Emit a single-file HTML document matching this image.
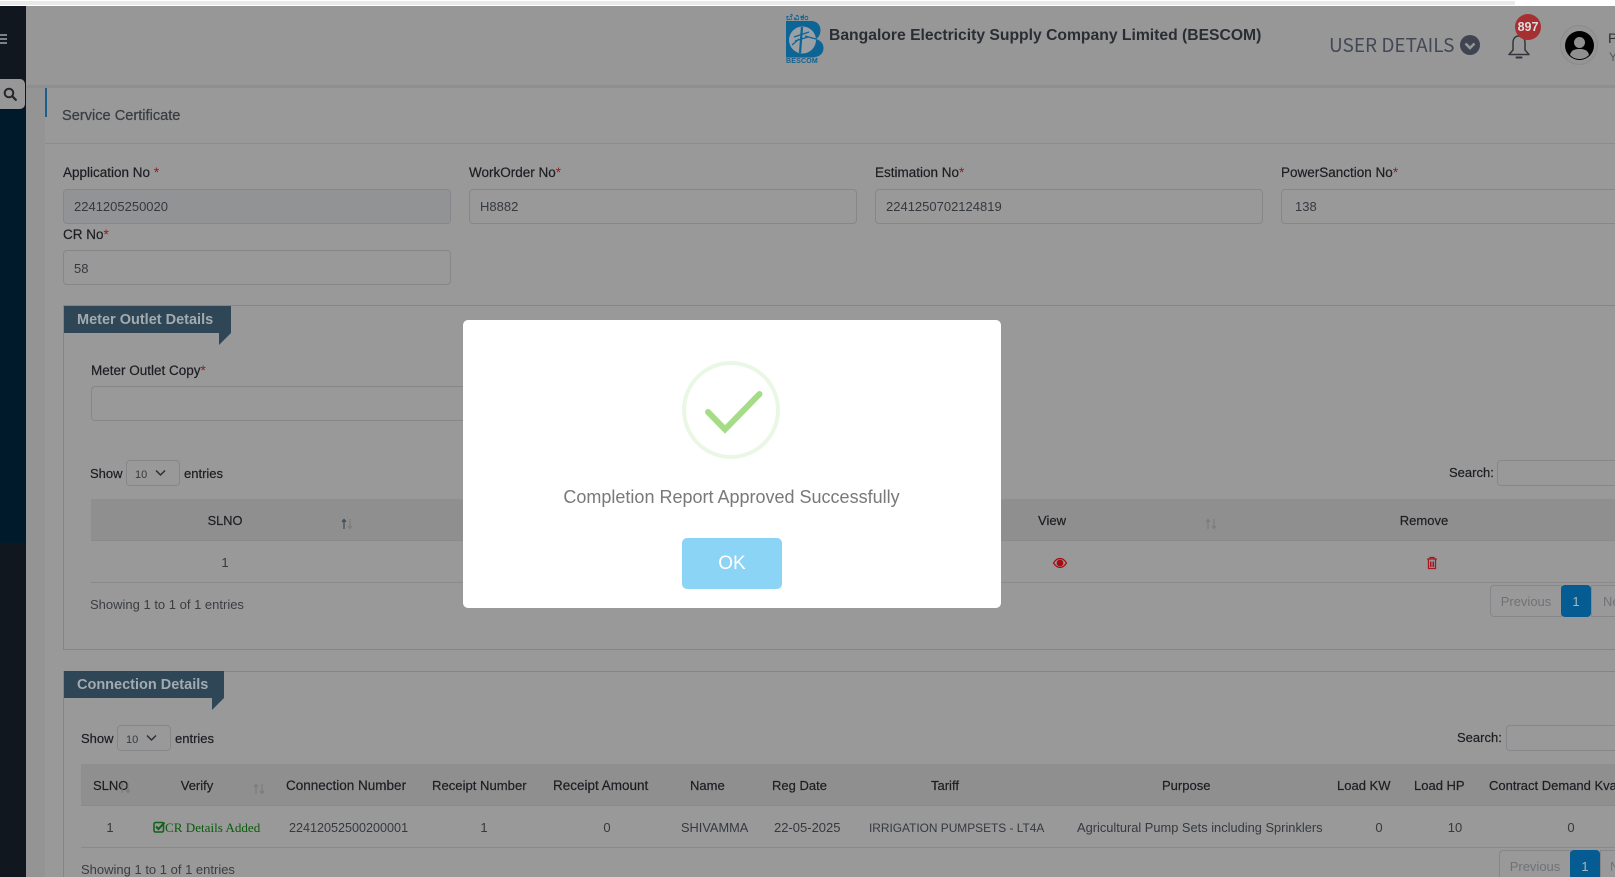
<!DOCTYPE html>
<html lang="en">
<head>
<meta charset="utf-8">
<title>Service Certificate</title>
<style>
html,body{margin:0;padding:0;width:1615px;height:877px;overflow:hidden;background:#999}
body{position:relative;font-family:"Liberation Sans","Noto Sans CJK SC",sans-serif}
div,svg,span.a{position:absolute}
.t{position:absolute;white-space:nowrap;line-height:20px;height:20px;font-size:13.5px;color:#25282c;margin-top:1px}
.c{transform:translateX(-50%)}
.b{color:#1c1e22;-webkit-text-stroke:.2px #1c1e22}
.v{color:#35393e}
.m{color:#3a3d42}
.r{color:#8f1c22;-webkit-text-stroke:0}
.in{box-sizing:border-box;border:1px solid #85878a;border-radius:4px;height:35px}
.sel{box-sizing:border-box;border:1px solid #85878a;border-radius:4px;height:26px;width:54px}
.hd{background:#8f8f8f;height:42px;border-bottom:1px solid #8a8a8a;box-sizing:border-box}
.ln{height:1px;background:#8a8a8a}
.tab{background:#2f4656;height:27px}
.tabt{font-weight:bold;font-size:14.5px;color:#a3abb0}
.pg{box-sizing:border-box;border:1px solid #85878a;color:#6f7276;font-size:13px;line-height:31px;text-align:center}
</style>
</head>
<body>
<!-- browser strip -->
<div style="left:0;top:0;width:1615px;height:6px;background:#fff"></div>
<div style="left:0;top:1px;width:1515px;height:4px;background:#e9e9e9"></div>

<!-- sidebar -->
<div style="left:0;top:6px;width:26px;height:871px;background:#11171f"></div>
<div style="left:0;top:109px;width:26px;height:434px;background:#001a2c"></div>
<div style="left:0;top:34px;width:7px;height:2px;background:#7d8087"></div>
<div style="left:0;top:38px;width:7px;height:2px;background:#7d8087"></div>
<div style="left:0;top:42px;width:7px;height:2px;background:#7d8087"></div>
<div style="left:0;top:79px;width:25px;height:30px;background:#979797;border-radius:0 5px 5px 0"></div>
<svg style="left:3px;top:87px" width="14" height="14" viewBox="0 0 14 14"><circle cx="6" cy="6" r="4.3" fill="none" stroke="#24272b" stroke-width="2"/><path d="M9.2 9.2L12.8 12.8" stroke="#24272b" stroke-width="2.2" stroke-linecap="round"/></svg>

<!-- main background -->
<div style="left:26px;top:6px;width:1589px;height:871px;background:#949494"></div>
<!-- header -->
<div style="left:26px;top:6px;width:1589px;height:79px;background:#979797"></div>
<div style="left:26px;top:85px;width:1589px;height:3px;background:#8f8f8f"></div>

<!-- logo -->
<span class="t" style="left:786px;top:6px;font-size:9px;color:#10608f;font-weight:bold;letter-spacing:1px">ಬೆವಿಕಂ</span>
<svg style="left:785px;top:20px" width="40" height="39" viewBox="0 0 40 39"><path d="M1 1H26C32 1 35.500 5 35.500 10C35.500 14 34 17 31 19C36 20.500 38.500 24 38.500 28C38.500 34 34 37.500 26 37.500H1Z" fill="#0d6497"/><circle cx="17.500" cy="20" r="13.500" fill="#9aa0a3"/><path d="M17 7L15 33" stroke="#0d6497" stroke-width="2.200" fill="none"/><path d="M9 17L24 12M10 21L23 17M7 25L14 19M20 16L31 19" stroke="#0d6497" stroke-width="1.200" fill="none"/></svg>
<span class="t" style="left:786px;top:51px;font-size:7px;font-weight:bold;color:#10608f;letter-spacing:.2px">BESCOM</span>

<span class="t" style="left:829px;top:25px;font-size:15.7px;font-weight:bold;color:#2a2d33">Bangalore Electricity Supply Company Limited (BESCOM)</span>
<span class="t" style="left:1329px;top:34px;font-size:19px;color:#434856;font-family:'Noto Sans CJK SC','Liberation Sans',sans-serif;font-weight:400">USER DETAILS</span>
<svg style="left:1460px;top:35px" width="20" height="20" viewBox="0 0 20 20"><circle cx="10" cy="10" r="10" fill="#3f4450"/><path d="M5.500 8.500L10 13L14.500 8.500" fill="none" stroke="#979797" stroke-width="2.600"/></svg>
<svg style="left:1507px;top:33px" width="24" height="27" viewBox="0 0 24 27"><path d="M12 3C7.500 3 6 6.500 6 10V17L2 21.500H22L18 17V10C18 6.500 16.500 3 12 3Z" fill="none" stroke="#33363d" stroke-width="1.500" stroke-linejoin="round"/><path d="M9.500 24.500H14.500" stroke="#33363d" stroke-width="2" stroke-linecap="round"/></svg>
<div style="left:1515px;top:14px;width:26px;height:26px;border-radius:50%;background:#a52f31"></div>
<span class="t c" style="left:1528px;top:16px;font-size:12.500px;font-weight:bold;color:#ddd">897</span>
<div style="left:1560px;top:25px;width:38px;height:40px;border-radius:50%;background:#959595;border:1px solid #8b8b8b;box-sizing:border-box"></div>
<svg style="left:1565px;top:31px" width="29" height="29" viewBox="0 0 29 29"><circle cx="14.500" cy="14.500" r="14.500" fill="#000"/><circle cx="14.500" cy="11.500" r="5.500" fill="#8f8f8f"/><path d="M5 24C6 19 10 18 14.500 18S23 19 24 24C21 27 18 28 14.500 28S8 27 5 24Z" fill="#8f8f8f"/></svg>
<span class="t" style="left:1608px;top:27px;font-size:14px;color:#2b2d32">P</span>
<span class="t" style="left:1609px;top:46px;font-size:12px;color:#55585c">Y</span>

<!-- card -->
<div style="left:45px;top:88px;width:1570px;height:789px;background:#999"></div>
<div style="left:45px;top:88px;width:2px;height:29px;background:#1b5f8a"></div>
<div style="left:45px;top:143px;width:1570px;height:1px;background:#8c8c8c"></div>
<span class="t m" style="left:62px;top:105px;font-size:14.600px;-webkit-text-stroke:.25px #3a3d42">Service Certificate</span>

<!-- form row -->
<span class="t b" style="left:63px;top:162px">Application No <span class="r">*</span></span>
<span class="t b" style="left:469px;top:162px">WorkOrder No<span class="r">*</span></span>
<span class="t b" style="left:875px;top:162px">Estimation No<span class="r">*</span></span>
<span class="t b" style="left:1281px;top:162px">PowerSanction No<span class="r">*</span></span>
<div class="in" style="left:63px;top:189px;width:388px;background:#929395"></div>
<div class="in" style="left:469px;top:189px;width:388px"></div>
<div class="in" style="left:875px;top:189px;width:388px"></div>
<div class="in" style="left:1281px;top:189px;width:340px"></div>
<span class="t v" style="left:74px;top:196px;font-size:13px">2241205250020</span>
<span class="t v" style="left:480px;top:196px;font-size:13px">H8882</span>
<span class="t v" style="left:886px;top:196px;font-size:13px">2241250702124819</span>
<span class="t v" style="left:1295px;top:196px;font-size:13px">138</span>
<span class="t b" style="left:63px;top:224px">CR No<span class="r">*</span></span>
<div class="in" style="left:63px;top:250px;width:388px"></div>
<span class="t v" style="left:74px;top:258px;font-size:13px">58</span>

<!-- meter outlet panel -->
<div style="left:63px;top:305px;width:1560px;height:345px;box-sizing:border-box;border:1px solid #858585"></div>
<div class="tab" style="left:64px;top:306px;width:167px"></div>
<svg style="left:219px;top:333px" width="12" height="12"><path d="M0 0H12L0 12Z" fill="#2f4656"/></svg>
<span class="t tabt" style="left:77px;top:309px">Meter Outlet Details</span>
<span class="t b" style="left:91px;top:360px">Meter Outlet Copy<span class="r">*</span></span>
<div class="in" style="left:91px;top:386px;width:800px"></div>

<span class="t b" style="left:90px;top:463px;font-size:13px">Show</span>
<div class="sel" style="left:126px;top:460px"></div>
<span class="t v" style="left:135px;top:464px;font-size:11px">10</span>
<svg style="left:155px;top:469px" width="11" height="8"><path d="M1 1.500L5.500 6L10 1.500" fill="none" stroke="#2c2f33" stroke-width="1.500"/></svg>
<span class="t b" style="left:184px;top:463px;font-size:13px">entries</span>
<span class="t b" style="left:1449px;top:462px;font-size:13px">Search:</span>
<div class="sel" style="left:1497px;top:460px;width:130px"></div>

<div class="hd" style="left:91px;top:499px;width:1524px"></div>
<span class="t c b" style="left:225px;top:510px;font-size:12.800px">SLNO</span>
<svg style="left:341px;top:518px" width="12" height="12" viewBox="0 0 12 12"><path d="M3 11V2M1 4L3 1.500L5 4" fill="none" stroke="#3b4a55" stroke-width="1.200"/><path d="M9 1V10M7 8L9 10.500L11 8" fill="none" stroke="#7c7c7c" stroke-width="1.200"/></svg>
<span class="t c b" style="left:1052px;top:510px;font-size:13px">View</span>
<svg style="left:1205px;top:518px" width="12" height="12" viewBox="0 0 12 12"><path d="M3 11V2M1 4L3 1.500L5 4M9 1V10M7 8L9 10.500L11 8" fill="none" stroke="#7c7c7c" stroke-width="1.200"/></svg>
<span class="t c b" style="left:1424px;top:510px;font-size:13px">Remove</span>
<span class="t c v" style="left:225px;top:552px;font-size:13px">1</span>
<svg style="left:1053px;top:556.500px" width="14" height="12" viewBox="0 0 14 12"><path d="M.5 6C2.500 2.800 4.500 1.500 7 1.500S11.500 2.800 13.500 6C11.500 9.200 9.500 10.500 7 10.500S2.500 9.200 .5 6Z" fill="none" stroke="#a80c12" stroke-width="1.300"/><circle cx="7" cy="6" r="3.400" fill="#a80c12"/></svg>
<svg style="left:1426px;top:556px" width="12" height="14" viewBox="0 0 12 14"><path d="M1 3H11M4 3V1.500H8V3M2.500 3.500V12.500H9.500V3.500" fill="none" stroke="#a31a22" stroke-width="1.300"/><path d="M4.500 5.500V11M6 5.500V11M7.500 5.500V11" stroke="#a31a22" stroke-width="1"/></svg>
<div class="ln" style="left:91px;top:582px;width:1524px"></div>
<span class="t m" style="left:90px;top:594px;font-size:13px">Showing 1 to 1 of 1 entries</span>
<div class="pg" style="left:1490px;top:585px;width:72px;height:32px;border-radius:4px 0 0 4px">Previous</div>
<div class="pg" style="left:1591px;top:585px;width:40px;height:32px;text-align:left;padding-left:11px">Next</div>
<div class="pg" style="left:1561px;top:585px;width:30px;height:32px;border:0;border-radius:4px;background:#045c93;color:#aab6bd;line-height:33px">1</div>

<!-- connection panel -->
<div style="left:63px;top:671px;width:1560px;height:230px;box-sizing:border-box;border:1px solid #858585"></div>
<div class="tab" style="left:64px;top:671px;width:160px"></div>
<svg style="left:212px;top:698px" width="12" height="12"><path d="M0 0H12L0 12Z" fill="#2f4656"/></svg>
<span class="t tabt" style="left:77px;top:674px">Connection Details</span>

<span class="t b" style="left:81px;top:728px;font-size:13px">Show</span>
<div class="sel" style="left:117px;top:725px"></div>
<span class="t v" style="left:126px;top:729px;font-size:11px">10</span>
<svg style="left:146px;top:734px" width="11" height="8"><path d="M1 1.500L5.500 6L10 1.500" fill="none" stroke="#2c2f33" stroke-width="1.500"/></svg>
<span class="t b" style="left:175px;top:728px;font-size:13px">entries</span>
<span class="t b" style="left:1457px;top:727px;font-size:13px">Search:</span>
<div class="sel" style="left:1506px;top:725px;width:120px"></div>

<div class="hd" style="left:81px;top:764px;width:1534px"></div>
<span class="t b" style="left:93px;top:775px;font-size:13px">SLNO</span>
<svg style="left:119px;top:782px" width="12" height="12" viewBox="0 0 12 12"><path d="M3 11V2M1 4L3 1.500L5 4M9 1V10M7 8L9 10.500L11 8" fill="none" stroke="#7c7c7c" stroke-width="1.200"/></svg>
<span class="t c b" style="left:197px;top:775px;font-size:13px">Verify</span>
<svg style="left:253px;top:783px" width="12" height="12" viewBox="0 0 12 12"><path d="M3 11V2M1 4L3 1.500L5 4M9 1V10M7 8L9 10.500L11 8" fill="none" stroke="#7c7c7c" stroke-width="1.200"/></svg>
<span class="t b" style="left:286px;top:775px;font-size:13.500px">Connection Number</span>
<span class="t b" style="left:432px;top:775px;font-size:13.100px">Receipt Number</span>
<span class="t b" style="left:553px;top:775px;font-size:13.500px">Receipt Amount</span>
<span class="t b" style="left:690px;top:775px;font-size:13px">Name</span>
<span class="t b" style="left:772px;top:775px;font-size:13px">Reg Date</span>
<span class="t b" style="left:931px;top:775px;font-size:13px">Tariff</span>
<span class="t b" style="left:1162px;top:775px;font-size:13px">Purpose</span>
<span class="t b" style="left:1337px;top:775px;font-size:13px">Load KW</span>
<span class="t b" style="left:1414px;top:775px;font-size:13px">Load HP</span>
<span class="t b" style="left:1489px;top:775px;font-size:13px">Contract Demand Kva</span>

<span class="t c v" style="left:110px;top:817px;font-size:13px">1</span>
<svg style="left:153px;top:821px" width="13" height="12" viewBox="0 0 13 12"><rect x="1" y="1.500" width="9.500" height="9.500" rx="1.500" fill="none" stroke="#11601a" stroke-width="1.500"/><path d="M3 5.500L5.500 8L11.500 1.500" fill="none" stroke="#11601a" stroke-width="2"/></svg>
<span class="t" style="left:165px;top:817px;font-size:13.100px;font-family:'Liberation Serif',serif;color:#0a5c0a">CR Details Added</span>
<span class="t v" style="left:289px;top:817px;font-size:12.600px">22412052500200001</span>
<span class="t c v" style="left:484px;top:817px;font-size:13px">1</span>
<span class="t c v" style="left:607px;top:817px;font-size:13px">0</span>
<span class="t v" style="left:681px;top:817px;font-size:12.800px">SHIVAMMA</span>
<span class="t v" style="left:774px;top:817px;font-size:13px">22-05-2025</span>
<span class="t v" style="left:869px;top:817px;font-size:11.900px">IRRIGATION PUMPSETS - LT4A</span>
<span class="t v" style="left:1077px;top:817px;font-size:12.850px">Agricultural Pump Sets including Sprinklers</span>
<span class="t c v" style="left:1379px;top:817px;font-size:13px">0</span>
<span class="t c v" style="left:1455px;top:817px;font-size:13px">10</span>
<span class="t c v" style="left:1571px;top:817px;font-size:13px">0</span>
<div class="ln" style="left:81px;top:847px;width:1534px"></div>
<span class="t m" style="left:81px;top:859px;font-size:13px">Showing 1 to 1 of 1 entries</span>
<div class="pg" style="left:1499px;top:850px;width:72px;height:32px;border-radius:4px 0 0 4px">Previous</div>
<div class="pg" style="left:1600px;top:850px;width:40px;height:32px;text-align:left;padding-left:9px">Next</div>
<div class="pg" style="left:1570px;top:850px;width:30px;height:32px;border:0;border-radius:4px;background:#045c93;color:#aab6bd;line-height:33px">1</div>

<!-- success modal -->
<div style="left:463px;top:320px;width:538px;height:288px;background:#fff;border-radius:5px"></div>
<div style="left:682px;top:361px;width:98px;height:98px;box-sizing:border-box;border:4px solid #eaf7e4;border-radius:50%"></div>
<svg style="left:695px;top:380px" width="76" height="60" viewBox="0 0 76 60"><path d="M13 32L30 49.500L64.500 14" fill="none" stroke="#a5dc86" stroke-width="6" stroke-linecap="round"/></svg>
<span class="t c" style="left:731.500px;top:486px;font-size:18px;color:#797979">Completion Report Approved Successfully</span>
<div style="left:682px;top:538px;width:100px;height:51px;background:#8cd4f5;border-radius:5px"></div>
<span class="t c" style="left:732px;top:553px;font-size:19px;color:#fff">OK</span>
</body>
</html>
